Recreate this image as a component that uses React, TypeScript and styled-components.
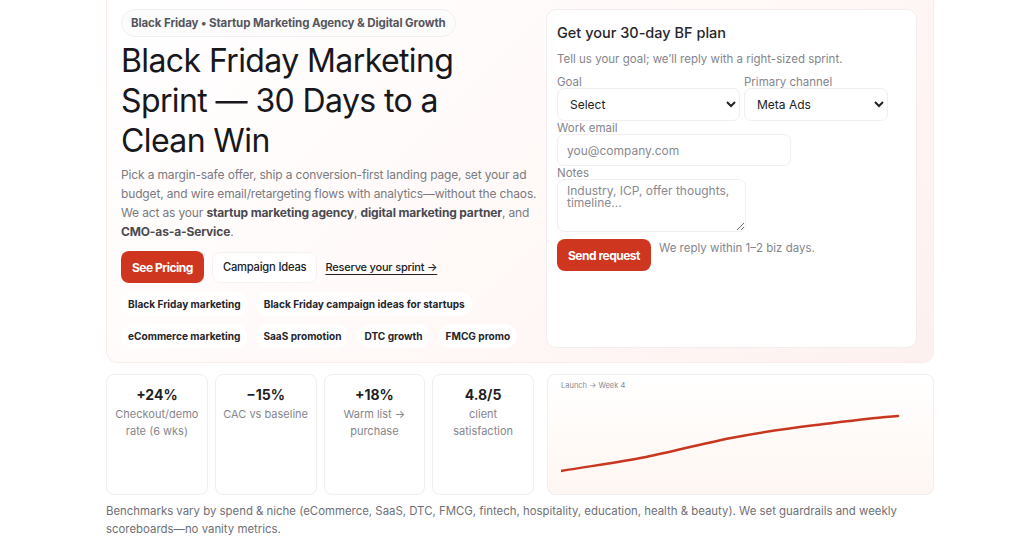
import React from "react";
import styled, { createGlobalStyle } from "styled-components";

const Global = createGlobalStyle`
  * { box-sizing: border-box; }
  html, body { margin: 0; padding: 0; background: #ffffff; }
  body { font-family: Inter, "Noto Sans", sans-serif; color: #1f1f24; }
`;

const Page = styled.div`
  width: 828px;
  margin-left: 106px;
`;

const Hero = styled.section`
  display: grid;
  grid-template-columns: 1fr 371px;
  gap: 17px;
  padding: 9px 16px 14px 14px;
  border: 1px solid #fbecea;
  border-top: none;
  border-radius: 0 0 12px 12px;
  background: linear-gradient(135deg, #ffffff 0%, #fffaf9 45%, #fdf1ef 100%);
`;

const Left = styled.div`
  display: flex;
  flex-direction: column;
  align-items: flex-start;
  min-width: 0;
`;

const Badge = styled.div`
  height: 28px;
  display: inline-flex;
  align-items: center;
  padding: 0 9px;
  border-radius: 14px;
  border: 1px solid #f1eeee;
  background: #fdfcfc;
  font-size: 11.5px;
  font-weight: 700;
  color: #55555d;
  letter-spacing: -0.1px;
`;

const Title = styled.h1`
  margin: 4px 0 0 0;
  font-size: 32px;
  line-height: 40px;
  font-weight: 400;
  letter-spacing: -0.6px;
  color: #17171c;
  width: 400px;
`;

const Lead = styled.p`
  margin: 4px 0 0 0;
  font-size: 12px;
  line-height: 19px;
  letter-spacing: -0.15px;
  color: #7a7a80;
  width: 416px;
  b { color: #4a4a50; font-weight: 700; }
`;

const Actions = styled.div`
  display: flex;
  align-items: center;
  gap: 8px;
  margin-top: 10px;
`;

const RedButton = styled.button`
  height: 32px;
  padding: 0 11px;
  border: none;
  border-radius: 8px;
  background: #cf3620;
  color: #fff;
  font-family: Inter, sans-serif;
  font-size: 12px;
  font-weight: 700;
  letter-spacing: -0.5px;
`;

const GhostButton = styled.button`
  height: 31px;
  padding: 0 10px;
  border: 1px solid #f6f2f1;
  border-radius: 8px;
  background: #fff;
  color: #202024;
  font-family: Inter, sans-serif;
  font-size: 11.2px;
  font-weight: 500;
  letter-spacing: -0.2px;
`;

const TextLink = styled.a`
  font-size: 11px;
  font-weight: 500;
  color: #202024;
  text-decoration: underline;
  text-underline-offset: 3px;
  letter-spacing: -0.2px;
`;

const ChipRow = styled.div<{ $first?: boolean }>`
  display: flex;
  gap: 9px;
  margin-top: ${(p) => (p.$first ? 9 : 8)}px;
`;

const Chip = styled.span`
  height: 24px;
  display: inline-flex;
  align-items: center;
  padding: 0 7px;
  border-radius: 12px;
  background: #ffffff;
  font-size: 10.1px;
  font-weight: 700;
  color: #25252a;
`;

const FormCard = styled.div`
  background: #fff;
  border: 1px solid #f3eeed;
  border-radius: 10px;
  padding: 13px 10px 10px 10px;
  display: flex;
  flex-direction: column;
  align-items: flex-start;
`;

const FormTitle = styled.h2`
  margin: 0;
  font-size: 14.5px;
  font-weight: 500;
  color: #26262b;
  line-height: 20px;
`;

const FormSub = styled.p`
  margin: 8px 0 0 0;
  font-size: 11.5px;
  color: #85858b;
  line-height: 16px;
`;

const FieldRow = styled.div<{ $first?: boolean }>`
  display: flex;
  gap: 4px;
  margin-top: ${(p) => (p.$first ? 9 : 1)}px;
`;

const Field = styled.label<{ $w: number }>`
  display: flex;
  flex-direction: column;
  width: ${(p) => p.$w}px;
  font-size: 11.5px;
  color: #85858b;
  line-height: 12px;
`;

const Select = styled.select`
  height: 33px;
  padding: 0 6px 0 8px;
  border: 1px solid #f1eeee;
  border-radius: 7px;
  background: #fff;
  font-family: Inter, sans-serif;
  font-size: 12px;
  color: #222;
`;

const Input = styled.input`
  height: 32px;
  padding: 0 9px;
  border: 1px solid #f1eeee;
  border-radius: 7px;
  background: #fff;
  font-family: Inter, sans-serif;
  font-size: 12px;
  color: #222;
  &::placeholder { color: #8a8a90; }
`;

const TextArea = styled.textarea`
  height: 53px;
  padding: 5px 9px;
  border: 1px solid #f1eeee;
  border-radius: 7px;
  background: #fff;
  font-family: Inter, sans-serif;
  font-size: 12px;
  line-height: 12px;
  color: #222;
  resize: vertical;
  &::placeholder { color: #8a8a90; }
`;

const SendRow = styled.div`
  display: flex;
  align-items: flex-start;
  gap: 8px;
  margin-top: 7px;
`;

const Note = styled.span`
  margin-top: 2px;
  font-size: 11.5px;
  color: #85858b;
`;

const Lower = styled.div`
  display: grid;
  grid-template-columns: 1fr 387px;
  gap: 13px;
  margin-top: 11px;
`;

const Stats = styled.div`
  display: grid;
  grid-template-columns: repeat(4, 1fr);
  gap: 7px;
`;

const Stat = styled.div`
  height: 121px;
  border: 1px solid #f0eeee;
  border-radius: 8px;
  background: #fff;
  display: flex;
  flex-direction: column;
  align-items: center;
  padding: 11px 6px 0;
  text-align: center;
`;

const StatValue = styled.div`
  font-size: 14px;
  font-weight: 700;
  color: #1f1f24;
  line-height: 18px;
`;

const StatLabel = styled.div`
  margin-top: 2px;
  font-size: 11px;
  color: #86868c;
  line-height: 17px;
`;

const ChartCard = styled.div`
  height: 121px;
  border: 1px solid #f0eeee;
  border-radius: 8px;
  background: linear-gradient(180deg, #ffffff 0%, #fffaf7 60%, #fef6f2 100%);
  padding: 5px 12px 0 13px;
  display: flex;
  flex-direction: column;
`;

const ChartLabel = styled.div`
  font-size: 7.5px;
  color: #8a8a90;
  line-height: 12px;
`;

const Foot = styled.p`
  margin: 7px 0 0 0;
  font-size: 11.4px;
  line-height: 18px;
  color: #6f6f76;
`;

const stats = [
  { v: "+24%", l: ["Checkout/demo", "rate (6 wks)"] },
  { v: "−15%", l: ["CAC vs baseline"] },
  { v: "+18%", l: ["Warm list →", "purchase"] },
  { v: "4.8/5", l: ["client", "satisfaction"] },
];

export default function App() {
  return (
    <Page>
      <Global />
      <Hero>
        <Left>
          <Badge>Black Friday • Startup Marketing Agency &amp; Digital Growth</Badge>
          <Title>Black Friday Marketing Sprint — 30 Days to a Clean Win</Title>
          <Lead>
            Pick a margin-safe offer, ship a conversion-first landing page, set your ad budget, and
            wire email/retargeting flows with analytics—without the chaos. We act as your{" "}
            <b>startup marketing agency</b>, <b>digital marketing partner</b>, and{" "}
            <b>CMO-as-a-Service</b>.
          </Lead>
          <Actions>
            <RedButton>See Pricing</RedButton>
            <GhostButton>Campaign Ideas</GhostButton>
            <TextLink>Reserve your sprint →</TextLink>
          </Actions>
          <ChipRow $first>
            <Chip>Black Friday marketing</Chip>
            <Chip>Black Friday campaign ideas for startups</Chip>
          </ChipRow>
          <ChipRow>
            <Chip>eCommerce marketing</Chip>
            <Chip>SaaS promotion</Chip>
            <Chip>DTC growth</Chip>
            <Chip>FMCG promo</Chip>
          </ChipRow>
        </Left>
        <FormCard>
          <FormTitle>Get your 30-day BF plan</FormTitle>
          <FormSub>Tell us your goal; we’ll reply with a right-sized sprint.</FormSub>
          <FieldRow $first>
            <Field $w={183}>
              Goal
              <Select defaultValue="Select">
                <option>Select</option>
              </Select>
            </Field>
            <Field $w={144}>
              Primary channel
              <Select defaultValue="Meta Ads">
                <option>Meta Ads</option>
              </Select>
            </Field>
          </FieldRow>
          <FieldRow>
            <Field $w={234}>
              Work email
              <Input placeholder="you@company.com" />
            </Field>
          </FieldRow>
          <FieldRow>
            <Field $w={189}>
              Notes
              <TextArea placeholder="Industry, ICP, offer thoughts, timeline…" />
            </Field>
          </FieldRow>
          <SendRow>
            <RedButton>Send request</RedButton>
            <Note>We reply within 1–2 biz days.</Note>
          </SendRow>
        </FormCard>
      </Hero>
      <Lower>
        <Stats>
          {stats.map((s) => (
            <Stat key={s.v}>
              <StatValue>{s.v}</StatValue>
              <StatLabel>
                {s.l.map((line) => (
                  <div key={line}>{line}</div>
                ))}
              </StatLabel>
            </Stat>
          ))}
        </Stats>
        <ChartCard>
          <ChartLabel>Launch → Week 4</ChartLabel>
          <svg width="360" height="100" viewBox="0 0 360 100">
            <path
              d="M0 79 C 30 74, 60 70, 85 65 S 140 52, 170 46 S 230 36, 255 33 S 310 26, 337 24"
              fill="none"
              stroke="#c8361f"
              strokeWidth="2.5"
              strokeLinecap="round"
            />
          </svg>
        </ChartCard>
      </Lower>
      <Foot>
        Benchmarks vary by spend &amp; niche (eCommerce, SaaS, DTC, FMCG, fintech, hospitality,
        education, health &amp; beauty). We set guardrails and weekly scoreboards—no vanity metrics.
      </Foot>
    </Page>
  );
}
